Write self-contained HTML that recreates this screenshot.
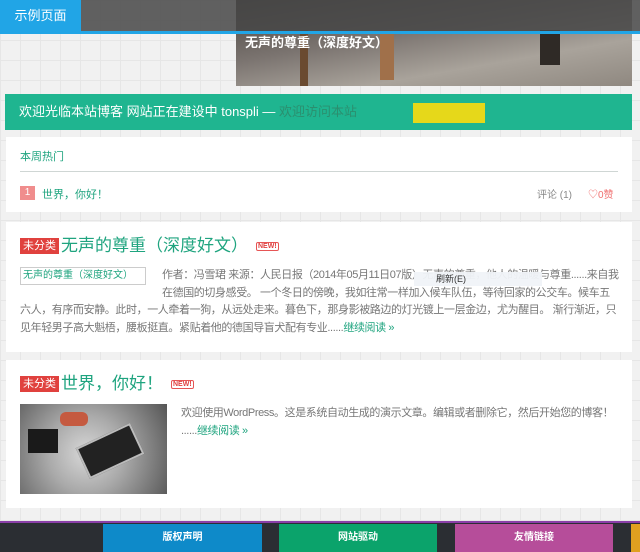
<!DOCTYPE html>
<html><head><meta charset="utf-8"><style>
*{margin:0;padding:0;box-sizing:border-box}
body{width:640px;height:552px;overflow:hidden;background:#f1f1f1;font-family:"Liberation Sans","Noto Sans CJK SC",sans-serif;position:relative;
background-image:linear-gradient(#e6e6e6 1px,transparent 1px),linear-gradient(90deg,#e6e6e6 1px,transparent 1px);background-size:20px 20px}
.abs{position:absolute}
.box{position:absolute;background:#fff;left:6px;width:626px}
.tag{display:inline-block;background:#e0413e;color:#fff;font-size:11px;padding:0 3px;line-height:16px;vertical-align:middle;margin-right:2px}
.new{display:inline-block;border:1px solid #e65555;color:#e04040;font-size:7px;font-weight:bold;padding:0 1px;border-radius:2px;vertical-align:middle;margin-left:8px}
.t{color:#1fa47f;font-size:17px;vertical-align:middle;line-height:20px}
.txt{font-size:11px;color:#777;line-height:17.5px;letter-spacing:-0.4px}
.g{color:#1fa47f}
</style></head><body>
<div class="abs" style="left:236px;top:0;width:396px;height:86px;background:linear-gradient(170deg,#4a4540 0%,#7b7470 40%,#a9a39b 70%,#8f8880 100%)"></div>
<div class="abs" style="left:300px;top:30px;width:8px;height:56px;background:#6a4a30"></div>
<div class="abs" style="left:380px;top:30px;width:14px;height:50px;background:#a0704a"></div>
<div class="abs" style="left:540px;top:30px;width:20px;height:35px;background:#2f2a26"></div>
<div class="abs" style="left:245px;top:32px;color:#fff;font-weight:bold;font-size:13px">无声的尊重（深度好文）</div>
<div class="abs" style="left:0;top:0;width:640px;height:31px;background:rgba(70,70,70,.85)"></div>
<div class="abs" style="left:0;top:31px;width:640px;height:3px;background:#21a5e6"></div>
<div class="abs" style="left:0;top:0;width:81px;height:31px;background:#21a5e6;color:#fff;font-size:13px;line-height:31px;text-align:center">示例页面</div>
<div class="abs" style="left:5px;top:94px;width:627px;height:36px;background:#1fb590;color:#fff;font-size:13px;line-height:36px;padding-left:14px;white-space:nowrap;overflow:hidden">欢迎光临本站博客 网站正在建设中 tonspli — <span style="color:#2b8f6f">欢迎访问本站</span><span style="display:inline-block;width:72px;height:20px;background:#e6d81a;vertical-align:middle;margin-left:56px"></span></div>
<div class="box" style="top:137px;height:75px">
<div class="abs g" style="left:14px;top:11px;font-size:11px">本周热门</div>
<div class="abs" style="left:14px;top:34px;width:598px;height:1px;background:#cfd6d4"></div>
<div class="abs" style="left:14px;top:49px;width:15px;height:14px;background:#f08d8d;color:#fff;font-size:10px;text-align:center;line-height:14px">1</div>
<div class="abs g" style="left:36px;top:49px;font-size:11px">世界，你好！</div>
<div class="abs" style="left:531px;top:49px;font-size:10px;color:#888">评论 (1)</div>
<div class="abs" style="left:582px;top:49px;font-size:10px;color:#f07070">♡0赞</div>
</div>
<div class="box" style="top:222px;height:130px">
<div class="abs" style="left:14px;top:14px;white-space:nowrap"><span class="tag">未分类</span><span class="t">无声的尊重（深度好文）</span><span class="new">NEW!</span></div>
<div class="abs" style="left:14px;top:45px;width:126px;height:18px;border:1px solid #ccc;font-size:10px;color:#1fa47f;line-height:16px;padding-left:2px;white-space:nowrap;overflow:hidden">无声的尊重（深度好文）</div>
<div class="abs txt" style="left:14px;top:45px;width:600px"><span style="float:left;width:142px;height:34px"></span>作者：冯雪珺 来源：人民日报（2014年05月11日07版）无声的尊重，他人的温暖与尊重......来自我在德国的切身感受。 一个冬日的傍晚，我如往常一样加入候车队伍，等待回家的公交车。候车五六人，有序而安静。此时，一人牵着一狗，从远处走来。暮色下，那身影被路边的灯光镀上一层金边，尤为醒目。 渐行渐近，只见年轻男子高大魁梧，腰板挺直。紧贴着他的德国导盲犬配有专业......<span class="g">继续阅读 »</span></div>
<div class="abs" style="left:408px;top:50px;width:128px;height:14px;background:rgba(240,243,248,.95);font-size:9px;color:#333;padding-left:22px">刷新(E)</div>
</div>
<div class="box" style="top:360px;height:148px">
<div class="abs" style="left:14px;top:14px;white-space:nowrap"><span class="tag">未分类</span><span class="t">世界，你好！</span><span class="new">NEW!</span></div>
<div class="abs" style="left:14px;top:44px;width:147px;height:90px;background:radial-gradient(circle at 45% 55%,#d8d8d8 0,#aaa 40%,#555 100%)"><div class="abs" style="left:60px;top:30px;width:60px;height:34px;background:#222;transform:rotate(-25deg);border:2px solid #bbb"></div><div class="abs" style="left:8px;top:25px;width:30px;height:24px;background:#1a1a1a"></div><div class="abs" style="left:40px;top:8px;width:28px;height:14px;background:#c55a40;border-radius:6px"></div></div>
<div class="abs txt" style="left:175px;top:44px;width:445px;line-height:18px">欢迎使用WordPress。这是系统自动生成的演示文章。编辑或者删除它，然后开始您的博客！<br>......<span class="g">继续阅读 »</span></div>
</div>
<div class="abs" style="left:0;top:521px;width:640px;height:31px;background:#2b2e33;border-top:2px solid #8a3fa8"></div>
<div class="abs" style="left:103px;top:524px;width:159px;height:28px;background:#0e8ac9;color:#fff;font-size:10px;font-weight:bold;text-align:center;line-height:28px">版权声明</div>
<div class="abs" style="left:279px;top:524px;width:158px;height:28px;background:#0ba36b;color:#fff;font-size:10px;font-weight:bold;text-align:center;line-height:28px">网站驱动</div>
<div class="abs" style="left:455px;top:524px;width:158px;height:28px;background:#b64d9a;color:#fff;font-size:10px;font-weight:bold;text-align:center;line-height:28px">友情链接</div>
<div class="abs" style="left:631px;top:524px;width:9px;height:28px;background:#e0a020"></div>
</body></html>
